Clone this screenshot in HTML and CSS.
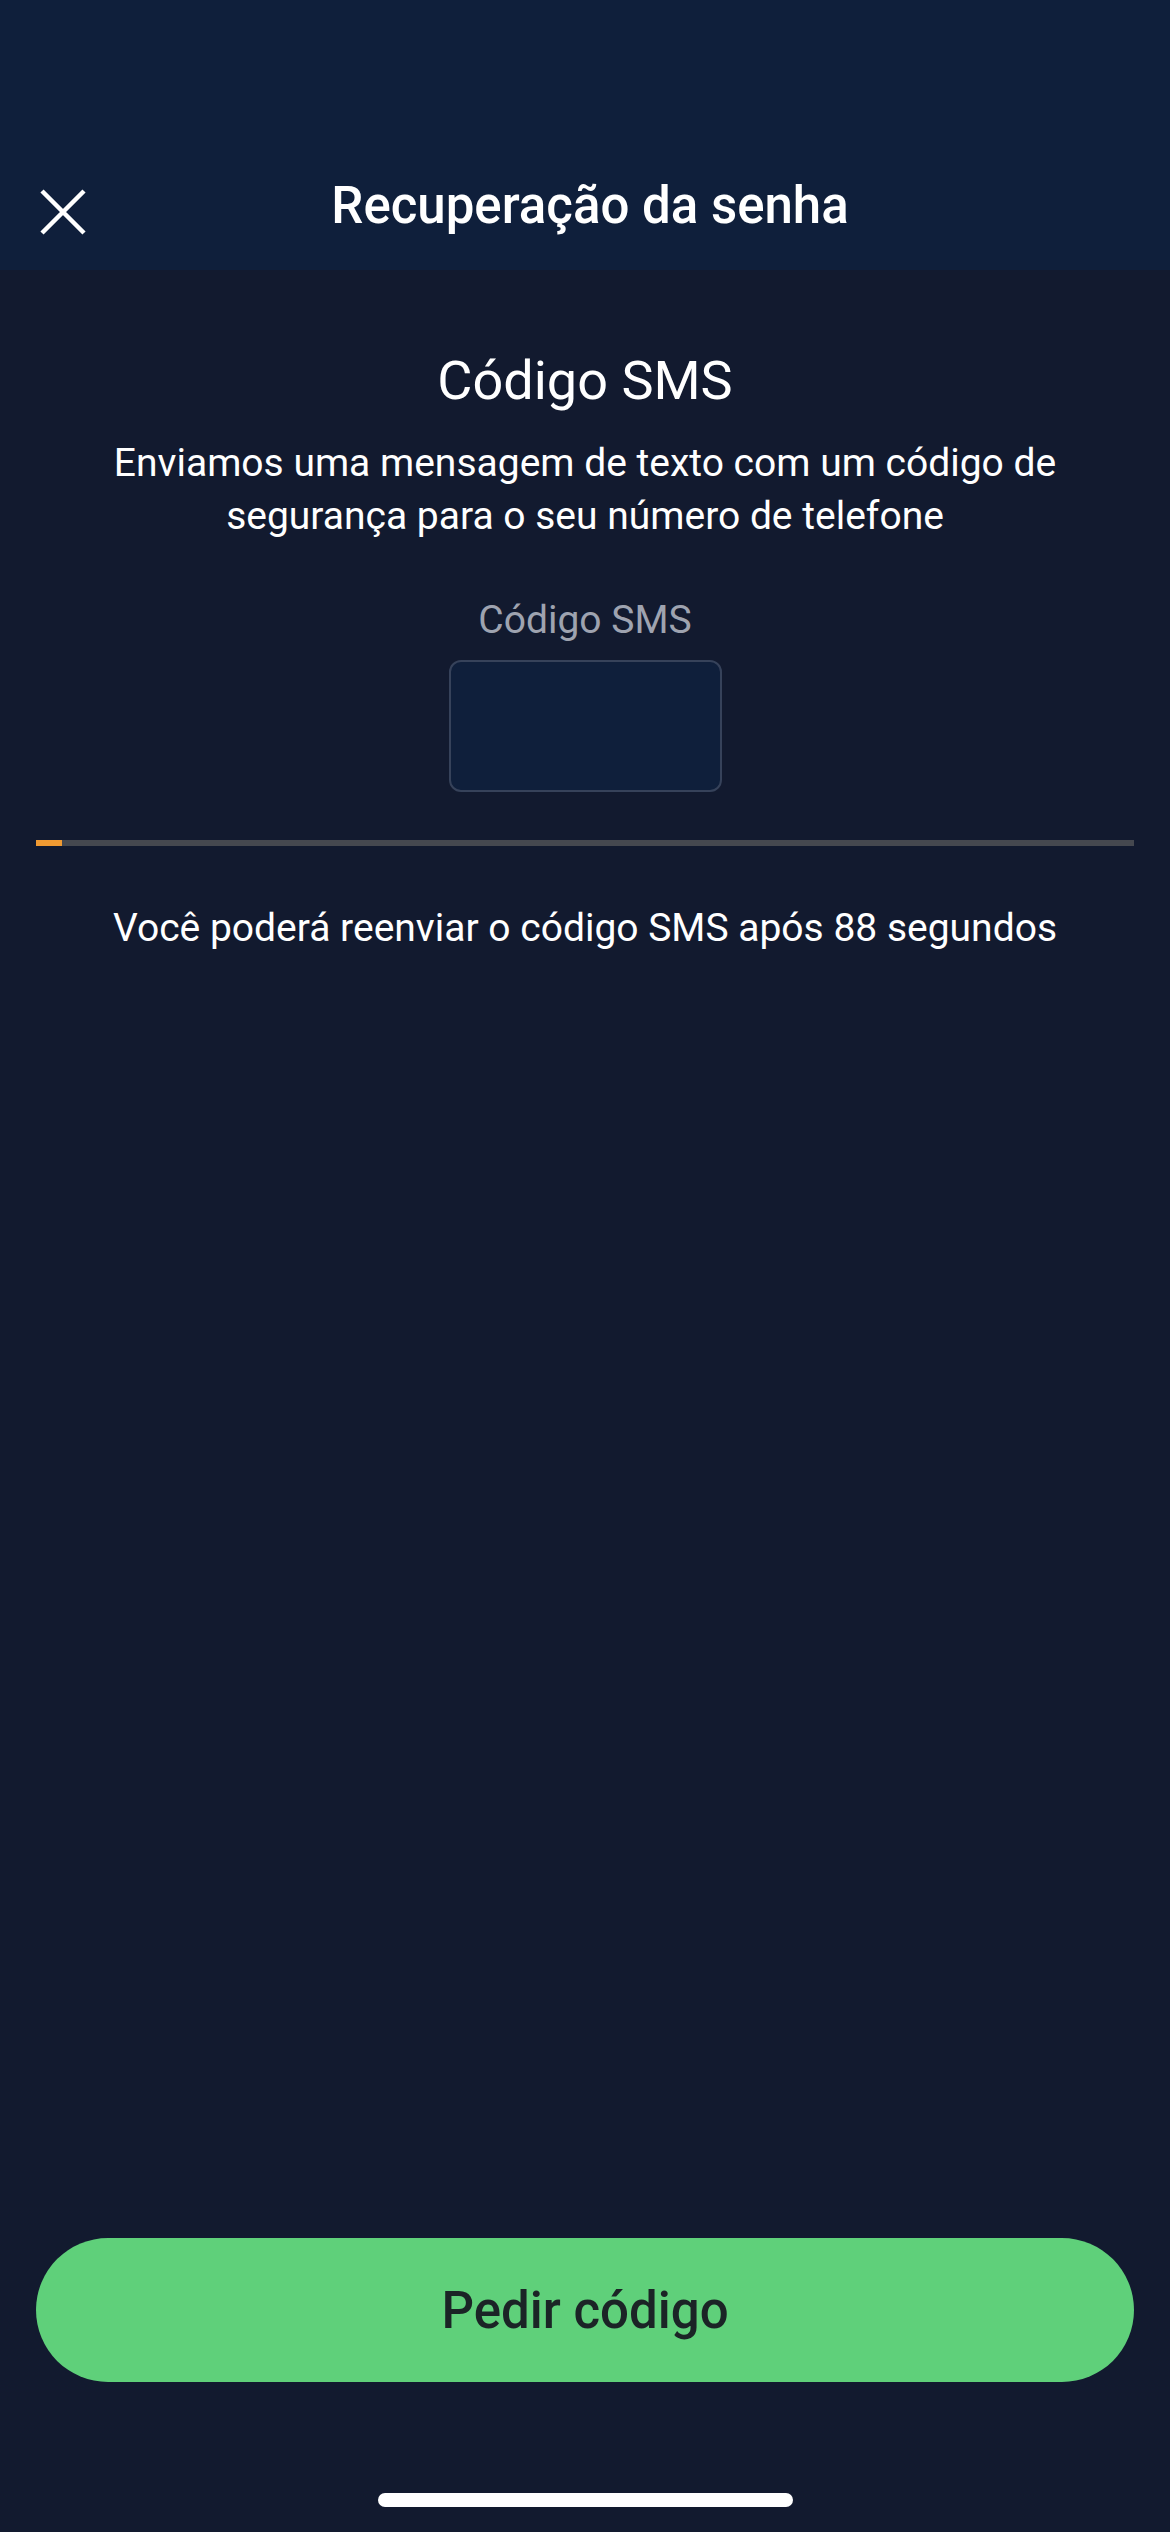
FILE: index.html
```html
<!DOCTYPE html>
<html lang="pt-BR">
<head>
<meta charset="utf-8">
<title>Recuperação da senha</title>
<link rel="stylesheet" href="styles.css">
</head>
<body>
<div class="screen">
  <header class="header">
    <div class="header-row">
      <button class="close" aria-label="Fechar">
        <svg width="46" height="46" viewBox="0 0 46 46"><path d="M2 2 L44 44 M44 2 L2 44" stroke="#ffffff" stroke-width="4.5" stroke-linecap="butt" fill="none"/></svg>
      </button>
      <h1 class="header-title">Recuperação da senha</h1>
      <span class="spacer-col"></span>
    </div>
  </header>
  <main class="content">
    <h2 class="title">Código SMS</h2>
    <p class="desc">Enviamos uma mensagem de texto com um código de segurança para o seu número de telefone</p>
    <label class="field-label" for="code">Código SMS</label>
    <input class="field" id="code" type="text" inputmode="numeric">
    <div class="progress"><div class="progress-fill" style="width:2.4%"></div></div>
    <p class="resend">Você poderá reenviar o código SMS após 88 segundos</p>
  </main>
  <div class="footer">
    <button class="primary">Pedir código</button>
    <div class="home-indicator"></div>
  </div>
</div>
</body>
</html>
```
FILE: styles.css
```css
* { box-sizing: border-box; }
html, body { margin: 0; padding: 0; }
body {
  background: #121a2f;
  font-family: Roboto, "Noto Sans", "Liberation Sans", sans-serif;
  color: #ffffff;
}
.screen {
  width: 1170px;
  height: 2532px;
  display: flex;
  flex-direction: column;
}
.header {
  background: #0f1f3b;
  height: 270px;
  padding-top: 168px;
}
.header-row {
  height: 76px;
  display: grid;
  grid-template-columns: 1fr auto 1fr;
  align-items: center;
  padding: 0 30px 0 40px;
}
.close {
  background: none;
  border: 0;
  padding: 0;
  width: 46px;
  height: 46px;
  justify-self: start;
  margin-top: 12px;
  display: flex;
}
.header-title {
  margin: 0;
  font-size: 51px;
  font-weight: 500;
  line-height: 76px;
}
.content {
  display: flex;
  flex-direction: column;
  align-items: center;
  padding: 0 36px;
}
.title {
  margin: 80px 0 0;
  font-size: 54px;
  font-weight: 400;
  line-height: 62px;
}
.desc {
  margin: 25px 0 0;
  font-size: 39px;
  line-height: 53px;
  text-align: center;
  max-width: 1040px;
}
.field-label {
  margin-top: 53px;
  font-size: 39px;
  line-height: 48px;
  color: #9ea3b0;
}
.field {
  margin-top: 16px;
  width: 273px;
  height: 132px;
  background: #0f1f3b;
  border: 2px solid #36425a;
  border-radius: 12px;
  outline: none;
}
.progress {
  margin-top: 48px;
  width: 100%;
  height: 6px;
  background: #45484f;
}
.progress-fill {
  height: 100%;
  background: #f09a32;
}
.resend {
  margin: 58px 0 0;
  font-size: 39px;
  line-height: 48px;
  text-align: center;
}
.footer {
  margin-top: auto;
  display: flex;
  flex-direction: column;
  align-items: center;
  padding: 0 36px 25px;
}
.primary {
  width: 100%;
  height: 144px;
  border: 0;
  border-radius: 72px;
  background: #5fd07a;
  color: #1b2426;
  font-family: Roboto, "Noto Sans", "Liberation Sans", sans-serif;
  font-size: 51px;
  font-weight: 500;
}
.home-indicator {
  margin-top: 111px;
  width: 415px;
  height: 14px;
  border-radius: 7px;
  background: #ffffff;
}
```
